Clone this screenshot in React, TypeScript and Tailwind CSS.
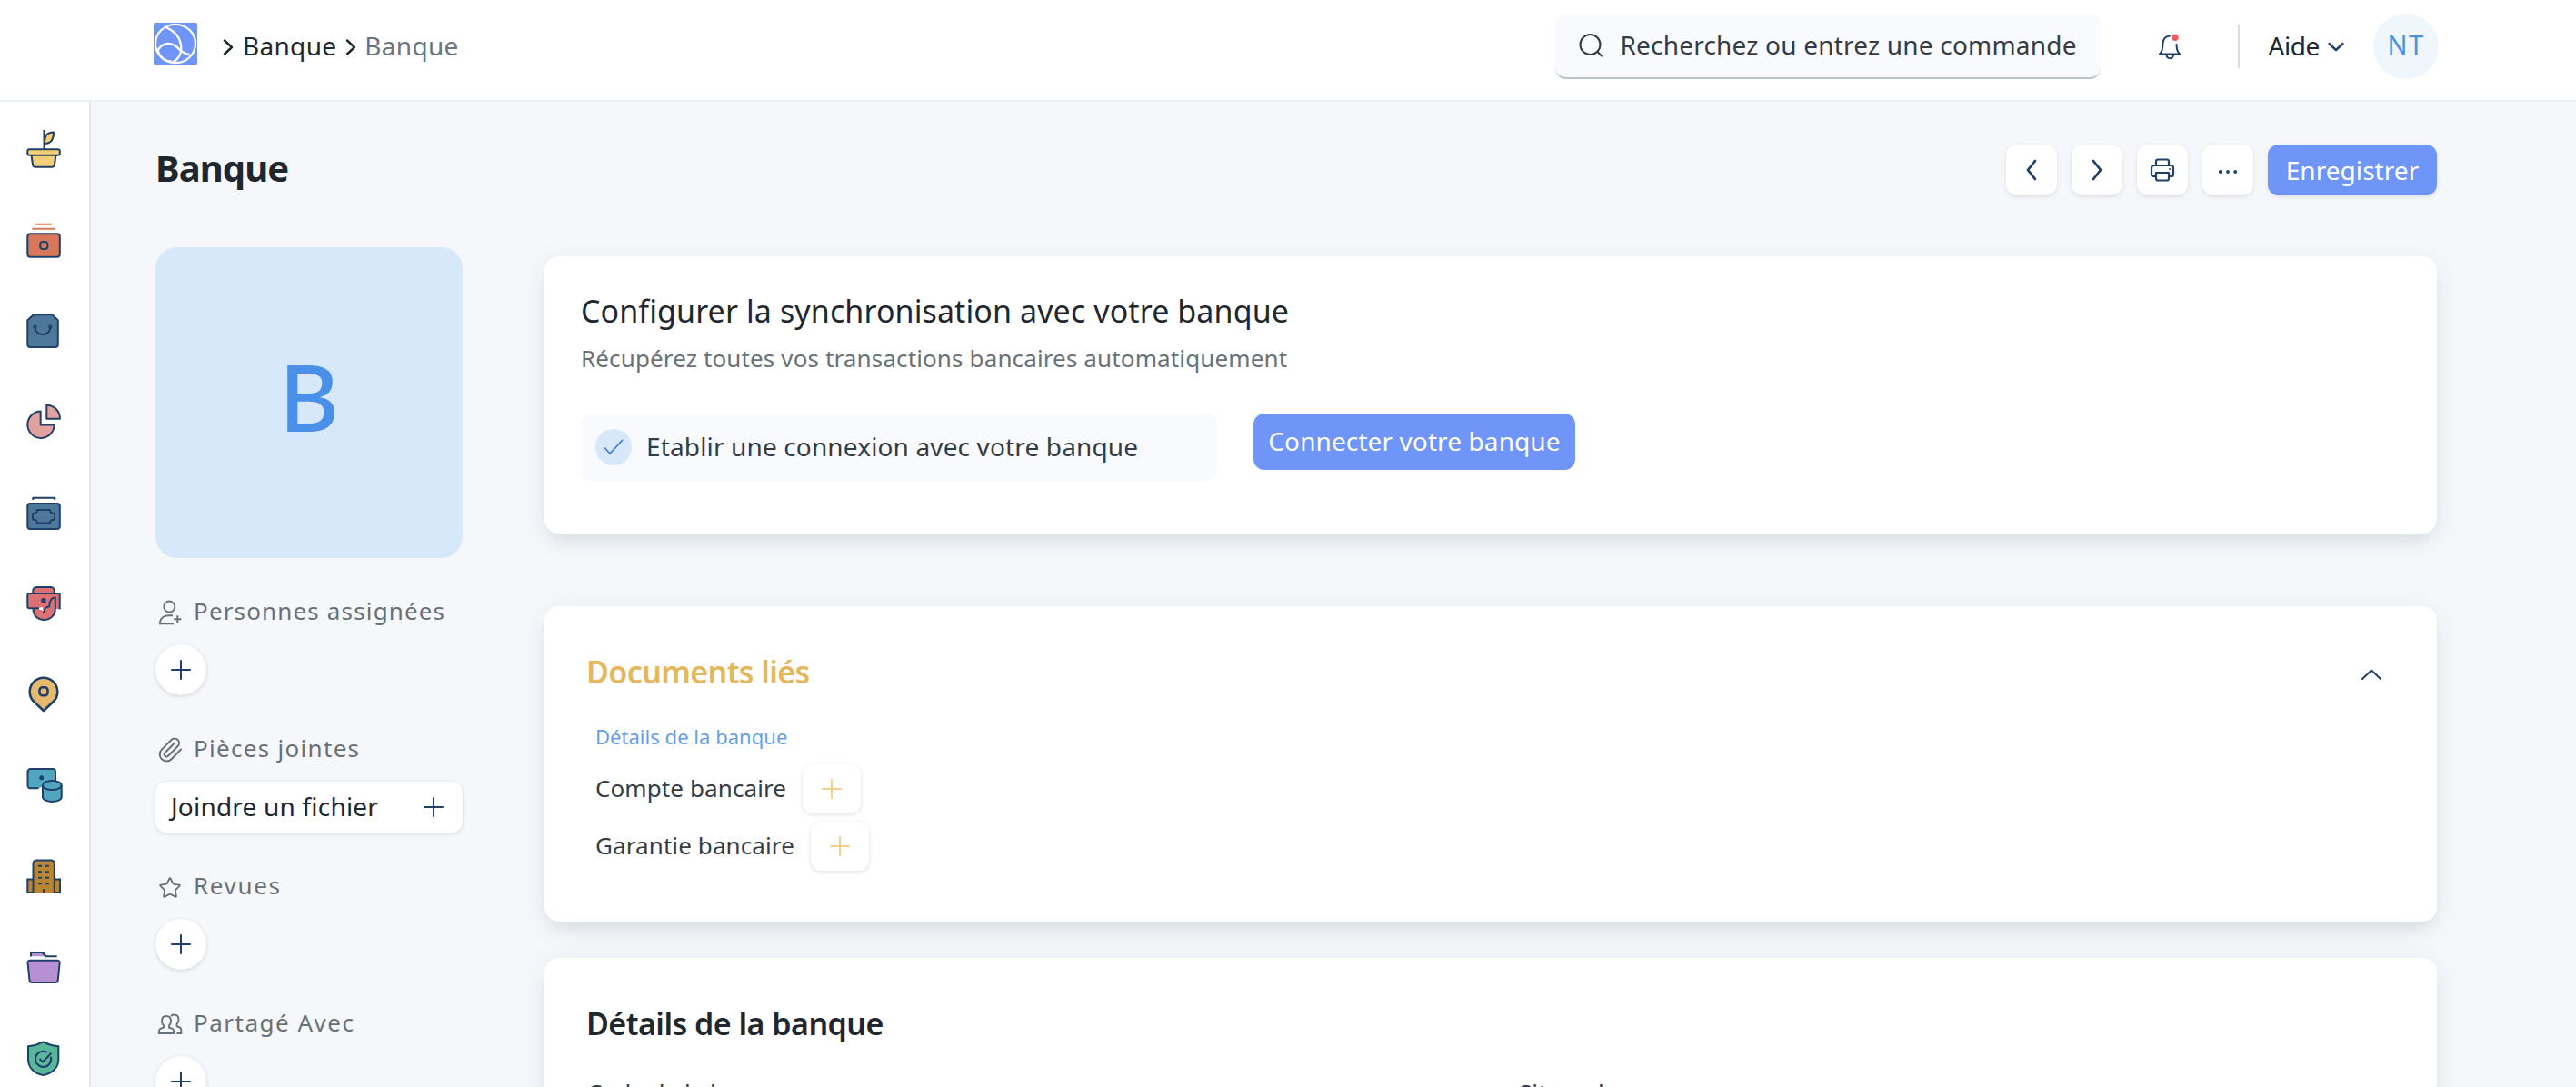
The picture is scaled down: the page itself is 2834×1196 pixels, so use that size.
import type { ReactNode } from 'react';
import { Paperclip, Star } from 'lucide-react';

const NAVY = '#1f4068';

function SideIcon({ children }: { children: ReactNode }) {
  return (
    <svg width="48" height="48" viewBox="0 0 48 48" fill="none" stroke={NAVY} strokeWidth="2" strokeLinejoin="round" className="shrink-0">
      {children}
    </svg>
  );
}

function Sidebar() {
  return (
    <nav className="flex w-[100px] shrink-0 flex-col gap-[52px] border-r-2 border-[#e4e8f0] bg-white pt-7 pl-6">
      <SideIcon>
        <path d="M25 18c0-8 2-12.500 10-12.500C35 13.500 32 18 25 18z" fill="#f7cf75" />
        <path d="M24.500 3v21" />
        <path d="M10.500 30.500l1.500 10.500a3 3 0 0 0 3 2.700h18a3 3 0 0 0 3-2.700l1.500-10.500" fill="#f7cf75" />
        <rect x="6.300" y="24.300" width="35.500" height="6.400" rx="2" fill="#f7cf75" />
      </SideIcon>
      <SideIcon>
        <path d="M15.300 6.700h17.400M11.300 11.700h25.400" stroke="#d9775a" />
        <rect x="6.300" y="17.200" width="35.500" height="25.600" rx="3" fill="#d9775a" />
        <rect x="20.300" y="26" width="8" height="8" rx="2.800" />
      </SideIcon>
      <SideIcon>
        <path d="M13 6.300h20.300l6.500 6V39a3 3 0 0 1-3 3H9.300a3 3 0 0 1-3-3V12.300z" fill="#4e789b" />
        <path d="M14.500 20c0 10.500 16.800 10.500 16.800 0" />
        <circle cx="14.500" cy="19.700" r="1.100" fill={NAVY} />
        <circle cx="31.300" cy="19.700" r="1.100" fill={NAVY} />
      </SideIcon>
      <SideIcon>
        <path d="M20.700 12.500a14.700 14.700 0 1 0 15 15h-15z" fill="#e2a09f" />
        <path d="M27.300 5.700v15h14.700c0-8.500-6.500-15-14.700-15z" fill="#e2a09f" />
      </SideIcon>
      <SideIcon>
        <path d="M12.300 10V7.800h24V10" />
        <rect x="6.300" y="14" width="35.500" height="28" rx="3" fill="#4e789b" />
        <path d="M17 21h14c0 2.500 2 4 5 4v6.500c-3 0-5 1.500-5 4H17c0-2.500-2-4-5-4V25c3 0 5-1.500 5-4z" />
      </SideIcon>
      <SideIcon>
        <path d="M12.300 13V10a4 4 0 0 1 4-4h15.500a4 4 0 0 1 4 4v3" fill="#dd7073" />
        <path d="M6.300 13h35.400v17h-4.900c0 7-5 12-12.400 12S12.500 37 12.500 29.500H8.300a2 2 0 0 1-2-2z" fill="#dd7073" stroke="none" />
        <path d="M15.500 29.500l7-1.500 1.500 4z" fill="#fff" stroke="none" />
        <path d="M19 29.300H8.300a2 2 0 0 1-2-2V15a2 2 0 0 1 2-2h33.400v17.500" />
        <path d="M12.500 30c0 7.500 5 12 12 12s12.300-5 12.300-12V17.500c-4 0-6.500 3-6.500 10-3.500 0-6.300 2.500-6.300 7.500" />
        <circle cx="24" cy="20.700" r="1.800" fill={NAVY} />
      </SideIcon>
      <SideIcon>
        <path d="M24 42L12.800 31.500A15.300 15.300 0 1 1 35.200 31.500z" fill="#e5ba6e" strokeWidth="2.600" />
        <rect x="19.500" y="16.200" width="9" height="9" rx="3.200" strokeWidth="2.600" />
      </SideIcon>
      <SideIcon>
        <path d="M18.500 27.300H9.500a3 3 0 0 1-3-3V9a3 3 0 0 1 3-3H34a3 3 0 0 1 3 3v11" fill="#4fa6be" />
        <circle cx="21.700" cy="15.700" r="1.500" fill={NAVY} />
        <path d="M23 24v13c0 3 5 5 10.300 5s10.400-2 10.400-5V24" fill="#4fa6be" />
        <ellipse cx="33.300" cy="24" rx="10.300" ry="5" fill="#4fa6be" />
      </SideIcon>
      <SideIcon>
        <path d="M12.500 27.500H6.300V42H42V27.500h-6.200" fill="#b98533" strokeLinejoin="miter" />
        <path d="M12.500 42V10a3.600 3.600 0 0 1 3.600-3.600h16.100a3.600 3.600 0 0 1 3.600 3.600v32" fill="#b98533" />
        <path d="M18 12.700h4M26 12.700h4M18 19.300h4M26 19.300h4M18 25.800h4M26 25.800h4M18 32.300h4M26 32.300h4M24 38v4" />
      </SideIcon>
      <SideIcon>
        <path d="M10 12.300V8h13l3.500 4.300" fill="#b78fd3" />
        <path d="M10 12.300V8h13l3.500 4.300h12.200" />
        <path d="M6.500 19.500a2.600 2.600 0 0 1 2.600-2.800h30a2.600 2.600 0 0 1 2.600 2.800l-2 19.200a2.600 2.600 0 0 1-2.600 2.300h-26a2.600 2.600 0 0 1-2.600-2.300z" fill="#b78fd3" />
      </SideIcon>
      <SideIcon>
        <path d="M23.600 6.300c5 2.600 10.500 4.400 16.700 5v14.500c0 9-6.800 15-16.700 17.300C13.700 40.800 7 34.800 7 25.800V11.300c6.200-.6 11.600-2.400 16.600-5z" fill="#58b69a" />
        <path d="M31.800 22.800a8.600 8.600 0 1 1-4-5" />
        <path d="M19.500 25l3.700 3.400 9.200-9.600" />
      </SideIcon>
    </nav>
  );
}

function Chevron({ d, w, h, color = NAVY, sw = 2.4 }: { d: string; w: number; h: number; color?: string; sw?: number }) {
  return (
    <svg width={w} height={h} viewBox={`0 0 ${w} ${h}`} fill="none" stroke={color} strokeWidth={sw} strokeLinecap="round" strokeLinejoin="round" className="shrink-0">
      <path d={d} />
    </svg>
  );
}

function Plus({ color = NAVY }: { color?: string }) {
  return <Chevron w={22} h={22} color={color} sw={2} d="M11 1v20M1 11h20" />;
}

function Header() {
  return (
    <header className="flex h-[112px] shrink-0 items-center border-b-2 border-[#ebf0f5] bg-white pr-[151px] pb-2 pl-[169px]">
      <svg width="48" height="46" viewBox="0 0 48 46" fill="none" stroke="#fff" strokeWidth="2.300" className="mb-1.5">
        <rect width="48" height="46" rx="1.500" fill="#6e95f7" stroke="none" />
        <ellipse cx="24" cy="23" rx="22" ry="21.200" />
        <path d="M13.500 5C23 9 28.500 15 30 24.500S27 41 20 43.700" />
        <path d="M4.500 31C8 23 17 20.500 24 25.500c5 4 7 8.500 15.500 9.500" />
        <path d="M4.500 31c3 8 9 11.500 15 11.500" />
      </svg>
      <div className="ml-[27px] flex items-center pb-[3px] text-[28px] leading-10 tracking-[0.3px] text-[#1f272e]">
        <div className="pt-1"><Chevron w={14} h={20} d="M3 2.500l8 7.500-8 7.500" color="#1f272e" /></div>
        <span className="ml-[9px]">Banque</span>
        <div className="ml-[9px] pt-1"><Chevron w={14} h={20} d="M3 2.500l8 7.500-8 7.500" color="#1f272e" /></div>
        <span className="ml-2 text-[#6b757e]">Banque</span>
      </div>
      <div className="ml-auto flex items-center">
        <div className="flex h-[72px] w-[600px] items-center rounded-xl border-b-2 border-[#bcc4cb] bg-[#f9fafe] pl-[26px]">
          <svg width="28" height="28" viewBox="0 0 28 28" fill="none" stroke="#333c44" strokeWidth="2" strokeLinecap="round">
            <circle cx="12.500" cy="13" r="11" />
            <path d="M20.500 21l4.500 4.500" />
          </svg>
          <span className="ml-[17px] pb-[3px] text-[28px] leading-10 tracking-[0.2px] whitespace-nowrap text-[#333c44]">Recherchez ou entrez une commande</span>
        </div>
        <svg width="28" height="32" viewBox="0 0 28 32" fill="none" stroke={NAVY} strokeWidth="2" strokeLinecap="round" strokeLinejoin="round" className="ml-[62px]">
          <path d="M14 4.500c-5.500.500-7.500 4.500-7.500 9 0 5-.500 8-3.500 11h22c-3-3-3.500-6-3.500-10.500" />
          <path d="M10.500 25c0 5.500 7.500 5.500 7.500 0" />
          <circle cx="20" cy="6.300" r="3.700" fill="#ef5b5b" stroke="none" />
        </svg>
        <div className="ml-[61px] h-12 w-0.5 bg-[#d9dee3]" />
        <span className="ml-[31px] pb-[3px] text-[28px] leading-10 tracking-[-0.4px] text-[#1f272e]">Aide</span>
        <div className="ml-2 pt-0.5">
          <Chevron w={20} h={12} d="M2.500 2l7.500 7 7.500-7" />
        </div>
        <div className="ml-[31px] flex size-[72px] items-center justify-center rounded-full bg-[#f0f7fc] pb-1 text-[29px] tracking-[1.500px] text-[#4a90e9]">NT</div>
      </div>
    </header>
  );
}

function IconButton({ children }: { children: ReactNode }) {
  return (
    <button className="flex size-14 items-center justify-center rounded-xl bg-white shadow-[0_1px_3px_rgba(17,43,66,0.08),0_2px_6px_rgba(17,43,66,0.06)]">
      {children}
    </button>
  );
}

function TitleBar() {
  return (
    <div className="flex h-14 items-center">
      <h1 className="pb-[5px] text-[40px] leading-[48px] font-bold tracking-[-0.9px] text-[#1f272e]">Banque</h1>
      <div className="ml-auto flex gap-4">
        <IconButton><Chevron w={16} h={24} d="M12 2L4 12l8 10" sw={2.800} /></IconButton>
        <IconButton><Chevron w={16} h={24} d="M4 2l8 10-8 10" sw={2.800} /></IconButton>
        <IconButton>
          <svg width="28" height="26" viewBox="0 0 28 26" fill="none" stroke={NAVY} strokeWidth="2.200" strokeLinejoin="round">
            <path d="M7 8V3.500A2 2 0 0 1 9 1.500h10a2 2 0 0 1 2 2V8" />
            <path d="M7 20H4a2 2 0 0 1-2-2v-7a3 3 0 0 1 3-3h18a3 3 0 0 1 3 3v7a2 2 0 0 1-2 2h-3" />
            <path d="M7 16h14v6.500a2 2 0 0 1-2 2H9a2 2 0 0 1-2-2z" />
            <path d="M21 12h2" strokeWidth="1.600" />
          </svg>
        </IconButton>
        <IconButton>
          <svg width="22" height="6" viewBox="0 0 22 6" fill={NAVY} className="mt-[3px]">
            <circle cx="2.800" cy="3" r="1.900" />
            <circle cx="11" cy="3" r="1.900" />
            <circle cx="19.200" cy="3" r="1.900" />
          </svg>
        </IconButton>
        <button className="flex h-14 w-[186px] items-center justify-center rounded-xl bg-[#6e95f7] pb-px text-[28px] tracking-[0.06px] text-white shadow-[0_1px_3px_rgba(17,43,66,0.08),0_2px_6px_rgba(17,43,66,0.06)]">
          Enregistrer
        </button>
      </div>
    </div>
  );
}

function SideSection({ icon, label, labelClass, children }: { icon: ReactNode; label: string; labelClass: string; children: ReactNode }) {
  return (
    <section className="mt-[38px]">
      <div className="mb-[17px] flex h-10 items-center pl-0.5 text-[#687178]">
        <span className="flex w-7 justify-center">{icon}</span>
        <span className={`ml-3 pt-px text-[26px] whitespace-nowrap ${labelClass}`}>{label}</span>
      </div>
      {children}
    </section>
  );
}

function RoundPlus() {
  return (
    <button className="flex size-14 items-center justify-center rounded-full bg-white shadow-[0_1px_4px_rgba(17,43,66,0.1),0_2px_6px_rgba(17,43,66,0.05)]">
      <Plus />
    </button>
  );
}

function ProfileColumn() {
  return (
    <aside className="w-[338px] shrink-0">
      <div className="flex h-[342px] items-center justify-center rounded-3xl bg-[#d7e8fa] pb-[15px] text-[102px] leading-none font-medium text-[#4a90e9]">B</div>
      <SideSection
        label="Personnes assignées"
        labelClass="tracking-[1.150px]"
        icon={
          <svg width="28" height="32" viewBox="0 0 28 32" fill="none" stroke="currentColor" strokeWidth="2">
            <circle cx="13.300" cy="11.600" r="6" />
            <path d="M18 30.300H3c0-5.500 3.500-9 9.500-9H17" />
            <path d="M22.300 21.200v8.200M18.200 25.300h8.200" />
          </svg>
        }
      >
        <RoundPlus />
      </SideSection>
      <SideSection label="Pièces jointes" labelClass="tracking-[1.300px]" icon={<Paperclip size={30} strokeWidth={1.6} className="mt-[3px] shrink-0" />}>
        <button className="flex h-14 w-full items-center justify-between rounded-xl bg-white pr-[21px] pl-[17px] text-[28px] text-[#1f272e] shadow-[0_1px_4px_rgba(17,43,66,0.1),0_2px_6px_rgba(17,43,66,0.05)]">
          <span className="pb-[3px] leading-10 tracking-[0.2px]">Joindre un fichier</span>
          <Plus />
        </button>
      </SideSection>
      <SideSection label="Revues" labelClass="tracking-[1.650px]" icon={<Star size={26} strokeWidth={1.7} className="mt-[5px]" />}>
        <RoundPlus />
      </SideSection>
      <SideSection
        label="Partagé Avec"
        labelClass="tracking-[1.500px]"
        icon={
          <svg width="28" height="32" viewBox="0 0 28 32" fill="none" stroke="currentColor" strokeWidth="1.900" strokeLinecap="round" strokeLinejoin="round">
            <path d="M10 9c-3.300 0-5 2.200-5 5.200 0 2.300.8 4 2 5v2.300l-3.500 1.300C2 23.400 1.700 24.500 1.700 28h16.600c0-3.500-.3-4.600-1.800-5.200L13 21.500v-2.300c1.200-1 2-2.700 2-5C15 11.200 13.300 9 10 9z" />
            <path d="M15.500 8.600c.8-.7 1.800-1.100 3-1.100 3.300 0 5 2.200 5 5.200 0 2.300-.8 4-2 5v2.500l3.200 1.300c1.500.6 1.800 2 1.800 6.500h-4.300" />
          </svg>
        }
      >
        <RoundPlus />
      </SideSection>
    </aside>
  );
}

function Card({ className, children }: { className: string; children: ReactNode }) {
  return (
    <section className={`rounded-2xl bg-white shadow-[0_6px_32px_rgba(20,50,60,0.07),0_12px_20px_-6px_rgba(20,50,60,0.09)] ${className}`}>
      {children}
    </section>
  );
}

function LinkRow({ label, className }: { label: string; className: string }) {
  return (
    <div className={`flex items-center pl-[10px] ${className}`}>
      <span className="pb-[2px] text-[26px] leading-9 tracking-[0.1px] text-[#333c44]">{label}</span>
      <button className="ml-[18px] flex h-[54px] w-16 items-center justify-center rounded-xl bg-white shadow-[0_1px_4px_rgba(17,43,66,0.1),0_2px_6px_rgba(17,43,66,0.05)]">
        <Plus color="#f3d08a" />
      </button>
    </div>
  );
}

function Cards() {
  return (
    <div className="w-[2082px] pt-[10px]">
      <Card className="h-[305px] px-10 pt-[38px]">
        <h2 className="text-[34px] leading-[44px] tracking-[0.1px] text-[#1f272e]">Configurer la synchronisation avec votre banque</h2>
        <p className="mt-3 text-[26px] leading-9 tracking-[0.13px] text-[#687178]">Récupérez toutes vos transactions bancaires automatiquement</p>
        <div className="mt-[43px] flex items-start gap-10">
          <div className="flex h-[74px] w-[700px] items-center rounded-xl bg-[#f9fafe] pl-4">
            <span className="flex size-10 items-center justify-center rounded-full bg-[#d7e8fa]">
              <Chevron w={22} h={18} d="M1.500 10l5.500 6L20.500 1.500" color="#3b7ddd" sw={1.800} />
            </span>
            <span className="ml-4 pb-[3px] text-[28px] leading-10 tracking-[0.14px] text-[#333c44]">Etablir une connexion avec votre banque</span>
          </div>
          <button className="h-[62px] w-[354px] rounded-xl bg-[#6e95f7] pb-[3px] text-[28px] leading-10 tracking-[0.1px] text-white">Connecter votre banque</button>
        </div>
      </Card>

      <Card className="mt-20 h-[347px] pt-[50px] pr-[60px] pl-[46px]">
        <div className="flex items-center justify-between">
          <h2 className="text-[34px] leading-[44px] font-semibold tracking-[-0.6px] text-[#e5b75c]">Documents liés</h2>
          <div className="pt-1.5">
            <Chevron w={24} h={14} d="M2 12L12 2.500 22 12" sw={2} />
          </div>
        </div>
        <h3 className="mt-[34px] pl-[10px] text-[22px] leading-[30px] tracking-[0.03px] text-[#62a0ea]">Détails de la banque</h3>
        <LinkRow label="Compte bancaire" className="mt-4" />
        <LinkRow label="Garantie bancaire" className="mt-[9px]" />
      </Card>

      <Card className="mt-10 h-[400px] pt-[50px] pl-[46px]">
        <h2 className="text-[34px] leading-[44px] font-semibold tracking-[-0.530px] text-[#1f272e]">Détails de la banque</h2>
        <div className="mt-9 grid grid-cols-[1026px_1fr] text-[26px] leading-9 text-[#333c44]">
          <span className="pl-px">Code de la banque</span>
          <span>Site web</span>
        </div>
      </Card>
    </div>
  );
}

export default function App() {
  return (
    <div className="flex h-[1196px] w-full flex-col overflow-hidden bg-[#f5f7fb] font-['Noto_Sans',sans-serif]">
      <Header />
      <div className="flex min-h-0 flex-1">
        <Sidebar />
        <main className="w-[2581px] pt-[47px] pl-[71px]">
          <TitleBar />
          <div className="mt-[57px] flex gap-[90px]">
            <ProfileColumn />
            <Cards />
          </div>
        </main>
      </div>
    </div>
  );
}
